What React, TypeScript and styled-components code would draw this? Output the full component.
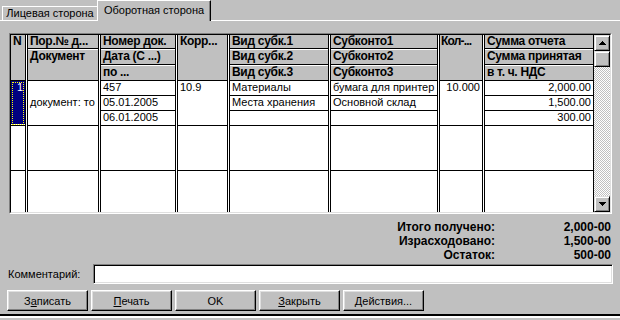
import styled, { createGlobalStyle } from "styled-components";

const GlobalStyle = createGlobalStyle`
  html, body { margin: 0; padding: 0; background: #c0c0c0; }
  *, *::before, *::after { box-sizing: border-box; }
  body { font-family: "Liberation Sans", Arial, sans-serif; }
`;

type HeadPart = { text: string; span: number };
type Col = {
  width: number;
  head: HeadPart[];
  values: string[];
  sep: boolean;
  right?: boolean;
  tight?: boolean;
};

const HEAD_H = [14, 16, 16];

const columns: Col[] = [
  {
    width: 72,
    head: [
      { text: "Пор.№ д...", span: 1 },
      { text: "Документ", span: 2 },
    ],
    values: ["", "документ: то", ""],
    sep: false,
  },
  {
    width: 76,
    head: [
      { text: "Номер док.", span: 1 },
      { text: "Дата (С ...)", span: 1 },
      { text: "по ...", span: 1 },
    ],
    values: ["457", "05.01.2005", "06.01.2005"],
    sep: true,
  },
  {
    width: 51,
    head: [{ text: "Корр...", span: 3 }],
    values: ["10.9", "", ""],
    sep: false,
  },
  {
    width: 100,
    head: [
      { text: "Вид субк.1", span: 1 },
      { text: "Вид субк.2", span: 1 },
      { text: "Вид субк.3", span: 1 },
    ],
    values: ["Материалы", "Места хранения", ""],
    sep: true,
  },
  {
    width: 108,
    head: [
      { text: "Субконто1", span: 1 },
      { text: "Субконто2", span: 1 },
      { text: "Субконто3", span: 1 },
    ],
    values: ["бумага для принтер", "Основной склад", ""],
    sep: true,
  },
  {
    width: 44,
    head: [{ text: "Кол-...", span: 3 }],
    values: ["10.000", "", ""],
    sep: false,
    right: true,
    tight: true,
  },
  {
    width: 110,
    head: [
      { text: "Сумма отчета", span: 1 },
      { text: "Сумма принятая", span: 1 },
      { text: "в т. ч. НДС", span: 1 },
    ],
    values: ["2,000.00", "1,500.00", "300.00"],
    sep: true,
    right: true,
  },
];

export default function App() {
  let row = 0;
  return (
    <Window>
      <GlobalStyle />
      <TabStrip>
        <Tab>Лицевая сторона</Tab>
        <Tab $active>Оборотная сторона</Tab>
      </TabStrip>

      <Body>
        <GridFrame>
          <GridInner>
            <Table>
              <Column $w={15} $first>
                <HeadCell $h={46}>N</HeadCell>
                <ColBody>
                  <SelectedCell>1</SelectedCell>
                  <EmptyRecord />
                  <EmptyRecord />
                </ColBody>
              </Column>

              {columns.map((c, ci) => {
                row = 0;
                return (
                  <Column key={ci} $w={c.width}>
                    {c.head.map((h, hi) => {
                      const start = row;
                      row += h.span;
                      const height = HEAD_H.slice(start, row).reduce((a, b) => a + b, 0);
                      return (
                        <HeadCell key={hi} $h={height} $lit={start > 0} $tight={c.tight}>
                          {h.text}
                        </HeadCell>
                      );
                    })}
                    <ColBody>
                      {c.values.map((v, vi) => (
                        <SubCell key={vi} $sep={c.sep || vi === 2} $right={c.right}>
                          {v}
                        </SubCell>
                      ))}
                      <EmptyRecord />
                      <EmptyRecord />
                    </ColBody>
                  </Column>
                );
              })}
            </Table>

            <ScrollBar>
              <ScrollButton>
                <svg width="7" height="4" viewBox="0 0 7 4">
                  <path d="M3 0h1v1h1v1h1v1h1v1H0V3h1V2h1V1h1z" fill="#000" />
                </svg>
              </ScrollButton>
              <ScrollButton />
              <Track />
              <ScrollButton>
                <svg width="7" height="4" viewBox="0 0 7 4">
                  <path d="M0 0h7v1H6v1H5v1H4v1H3V3H2V2H1V1H0z" fill="#000" />
                </svg>
              </ScrollButton>
            </ScrollBar>
          </GridInner>
        </GridFrame>

        <Totals>
          <span>Итого получено:</span>
          <span>2,000-00</span>
          <span>Израсходовано:</span>
          <span>1,500-00</span>
          <span>Остаток:</span>
          <span>500-00</span>
        </Totals>

        <CommentRow>
          <Label>Комментарий:</Label>
          <Field />
        </CommentRow>

        <ButtonRow>
          <Button>
            З<Accel>а</Accel>писать
          </Button>
          <Button>
            <Accel>П</Accel>ечать
          </Button>
          <Button>OK</Button>
          <Button>
            <Accel>З</Accel>акрыть
          </Button>
          <Button>
            <Accel>Д</Accel>ействия...
          </Button>
        </ButtonRow>
      </Body>
      <BottomEdge />
    </Window>
  );
}

const Window = styled.div`
  width: 620px;
  height: 320px;
  overflow: hidden;
  background: #c0c0c0;
  display: flex;
  flex-direction: column;
  font-family: "Liberation Sans", Arial, sans-serif;
  font-size: 11px;
  color: #000;
`;

const TabStrip = styled.div`
  height: 21px;
  flex: none;
  display: flex;
  align-items: flex-end;
  padding-left: 2px;
  border-bottom: 1px solid #fff;
`;

const Tab = styled.div<{ $active?: boolean }>`
  height: ${(p) => (p.$active ? 21 : 14)}px;
  margin-bottom: ${(p) => (p.$active ? -1 : 0)}px;
  width: ${(p) => (p.$active ? 114 : 95)}px;
  padding-top: ${(p) => (p.$active ? 3 : 0)}px;
  background: #c0c0c0;
  border-top: 1px solid #fff;
  border-left: 1px solid #fff;
  border-right: ${(p) => (p.$active ? "1px solid #000" : "none")};
  box-shadow: ${(p) => (p.$active ? "inset -1px 0 #808080" : "none")};
  text-align: center;
  line-height: 13px;
  white-space: nowrap;
  position: relative;
`;

const Body = styled.div`
  flex: none;
  display: flex;
  flex-direction: column;
  padding: 12px 8px 0 7px;
`;

const GridFrame = styled.div`
  margin-left: 2px;
  width: 603px;
  height: 181px;
  border: 1px solid;
  border-color: #808080 #fff #fff #808080;
`;

const GridInner = styled.div`
  height: 100%;
  display: flex;
  border: 1px solid;
  border-color: #000 #dfdfdf #dfdfdf #000;
`;

const Table = styled.div`
  display: flex;
  gap: 1px;
  background: #fff;
  width: 583px;
  flex: none;
  overflow: hidden;
`;

const Column = styled.div<{ $w: number; $first?: boolean }>`
  width: ${(p) => p.$w}px;
  flex: none;
  display: flex;
  flex-direction: column;
  border-left: ${(p) => (p.$first ? "none" : "1px solid #000")};
  border-right: 1px solid #000;
  overflow: hidden;
`;

const HeadCell = styled.div<{ $h: number; $lit?: boolean; $tight?: boolean }>`
  height: ${(p) => p.$h}px;
  flex: none;
  background: #c0c0c0;
  border-top: ${(p) => (p.$lit ? "1px solid #fff" : "none")};
  border-bottom: 1px solid #000;
  padding-left: ${(p) => (p.$tight ? 1 : 2)}px;
  font-size: 12px;
  font-weight: bold;
  letter-spacing: ${(p) => (p.$tight ? -0.8 : -0.3)}px;
  line-height: 13px;
  white-space: nowrap;
  overflow: hidden;
`;

const ColBody = styled.div`
  flex: 1;
  overflow: hidden;
  background: #fff;
`;

const SubCell = styled.div<{ $sep: boolean; $right?: boolean }>`
  height: 15px;
  border-bottom: 1px solid ${(p) => (p.$sep ? "#000" : "transparent")};
  padding: 0 2px;
  line-height: 13px;
  white-space: nowrap;
  overflow: hidden;
  text-align: ${(p) => (p.$right ? "right" : "left")};
`;

const EmptyRecord = styled.div`
  height: 45px;
  border-bottom: 1px solid #000;
`;

const SelectedCell = styled.div`
  height: 45px;
  border-bottom: 1px solid #000;
  background: #000080;
  box-shadow: inset 0 -1px #fff;
  color: #fff;
  text-align: right;
  line-height: 12px;
  padding-right: 2px;
  outline: 1px dotted #ffff00;
  outline-offset: -2px;
`;

const ScrollBar = styled.div`
  width: 16px;
  flex: none;
  display: flex;
  flex-direction: column;
`;

const ScrollButton = styled.div`
  height: 16px;
  flex: none;
  display: flex;
  align-items: center;
  justify-content: center;
  background: #c0c0c0;
  border-top: 1px solid #dfdfdf;
  border-left: 1px solid #dfdfdf;
  border-right: 1px solid #000;
  border-bottom: 1px solid #000;
  box-shadow: inset 1px 1px #fff, inset -1px -1px #808080;
`;

const Track = styled.div`
  flex: 1;
  background-color: #fff;
  background-image: repeating-conic-gradient(#c0c0c0 0 25%, #fff 0 50%);
  background-size: 2px 2px;
`;

const Totals = styled.div`
  margin-top: 6px;
  display: grid;
  grid-template-columns: 1fr 116px;
  font-size: 12px;
  font-weight: bold;
  line-height: 14px;
  text-align: right;
  padding-right: 1px;
`;

const CommentRow = styled.div`
  margin-top: 2px;
  display: grid;
  grid-template-columns: 85px 520px;
  align-items: center;
  padding-left: 1px;
`;

const Label = styled.span`
  white-space: nowrap;
`;

const Field = styled.div`
  height: 20px;
  background: #fff;
  border: 1px solid;
  border-color: #808080 #fff #fff #808080;
  box-shadow: inset 1px 1px #000, inset -1px -1px #dfdfdf;
`;

const ButtonRow = styled.div`
  margin-top: 6px;
  display: flex;
  gap: 3px;
`;

const Button = styled.div`
  width: 81px;
  height: 21px;
  display: flex;
  align-items: center;
  justify-content: center;
  background: #c0c0c0;
  border-top: 1px solid #fff;
  border-left: 1px solid #fff;
  border-right: 1px solid #000;
  border-bottom: 1px solid #000;
  box-shadow: inset -1px -1px #808080, inset 1px 1px #dfdfdf;
  white-space: nowrap;
`;

const Accel = styled.span`
  text-decoration: underline;
`;

const BottomEdge = styled.div`
  margin-top: 3px;
  height: 4px;
  flex: none;
  border-top: 2px solid #000;
  border-bottom: 2px solid #fff;
`;
